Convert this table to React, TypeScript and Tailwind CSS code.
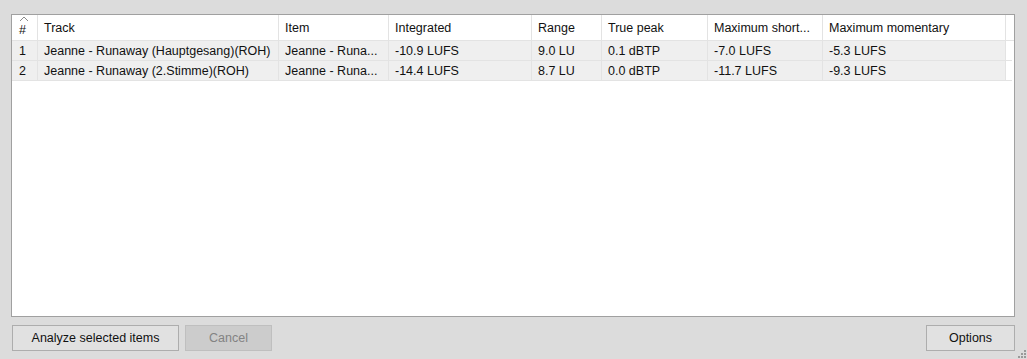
import React from 'react';

type Row = {
  n: number;
  track: string;
  item: string;
  integrated: string;
  range: string;
  peak: string;
  shortTerm: string;
  momentary: string;
};

const rows: Row[] = [
  {
    n: 1,
    track: 'Jeanne - Runaway (Hauptgesang)(ROH)',
    item: 'Jeanne - Runa...',
    integrated: '-10.9 LUFS',
    range: '9.0 LU',
    peak: '0.1 dBTP',
    shortTerm: '-7.0 LUFS',
    momentary: '-5.3 LUFS',
  },
  {
    n: 2,
    track: 'Jeanne - Runaway (2.Stimme)(ROH)',
    item: 'Jeanne - Runa...',
    integrated: '-14.4 LUFS',
    range: '8.7 LU',
    peak: '0.0 dBTP',
    shortTerm: '-11.7 LUFS',
    momentary: '-9.3 LUFS',
  },
];

const Cell: React.FC<{ w: string; children?: React.ReactNode; pad?: string }> = ({ w, children, pad = 'pl-[6px]' }) => (
  <div className={`${w} shrink-0 h-full border-r border-[#e3e3e3] ${pad} pt-[1px] flex items-center whitespace-nowrap overflow-hidden`}>
    {children}
  </div>
);

const Columns: React.FC<{ cells: React.ReactNode[] }> = ({ cells }) => (
  <>
    <Cell w="w-[26px]" pad="pl-[7px]">{cells[0]}</Cell>
    <Cell w="w-[241px]">{cells[1]}</Cell>
    <Cell w="w-[110px]">{cells[2]}</Cell>
    <Cell w="w-[143px]">{cells[3]}</Cell>
    <Cell w="w-[70px]">{cells[4]}</Cell>
    <Cell w="w-[106px]">{cells[5]}</Cell>
    <Cell w="w-[115px]">{cells[6]}</Cell>
    <Cell w="w-[183px]">{cells[7]}</Cell>
  </>
);

const SortArrow = () => (
  <svg className="absolute left-[7px] top-[1px]" width="10" height="6" viewBox="0 0 10 6">
    <path d="M1 5 L5 1 L9 5" fill="none" stroke="#8a8a8a" strokeWidth="1" />
  </svg>
);

const ResizeGrip = () => (
  <svg className="absolute right-[1px] bottom-[1px]" width="10" height="10" viewBox="0 0 10 10">
    {[
      [8, 2], [5, 5], [8, 5], [2, 8], [5, 8], [8, 8],
    ].map(([x, y], i) => (
      <rect key={i} x={x} y={y} width="2" height="2" fill="#9a9a9a" />
    ))}
  </svg>
);

export default function App() {
  return (
    <div
      className="relative w-[1027px] h-[359px] bg-[#dcdcdc] pt-[14px] pl-[11px] pr-[12px] text-[12.5px] text-[#111] flex flex-col"
      style={{ fontFamily: '"Liberation Sans", Arial, sans-serif' }}
    >
      <div className="h-[303px] border border-[#a0a0a0] bg-white flex flex-col">
        <div className="relative h-[26px] flex border-b border-[#e3e3e3] pr-[8px]">
          <SortArrow />
          <Columns
            cells={[
              <span className="pt-[4px]">#</span>,
              'Track',
              'Item',
              'Integrated',
              'Range',
              'True peak',
              'Maximum short...',
              'Maximum momentary',
            ]}
          />
        </div>
        {rows.map((r) => (
          <div key={r.n} className="h-[20px] flex border-b border-[#e3e3e3] mr-[2px]">
            <div className="flex bg-[#efefef] h-full">
              <Columns
                cells={[r.n, r.track, r.item, r.integrated, r.range, r.peak, r.shortTerm, r.momentary]}
              />
            </div>
          </div>
        ))}
      </div>

      <div className="mt-[8px] flex items-start pl-[1px]">
        <button className="w-[167px] h-[26px] pt-[1px] border border-[#adadad] bg-[#e1e1e1] text-[#111]">
          Analyze selected items
        </button>
        <button className="ml-[6px] w-[87px] h-[26px] pt-[1px] border border-[#bfbfbf] bg-[#cccccc] text-[#838383]">
          Cancel
        </button>
        <div className="flex-1" />
        <button className="w-[89px] h-[26px] pt-[1px] border border-[#adadad] bg-[#e1e1e1] text-[#111]">
          Options
        </button>
      </div>

      <ResizeGrip />
    </div>
  );
}
